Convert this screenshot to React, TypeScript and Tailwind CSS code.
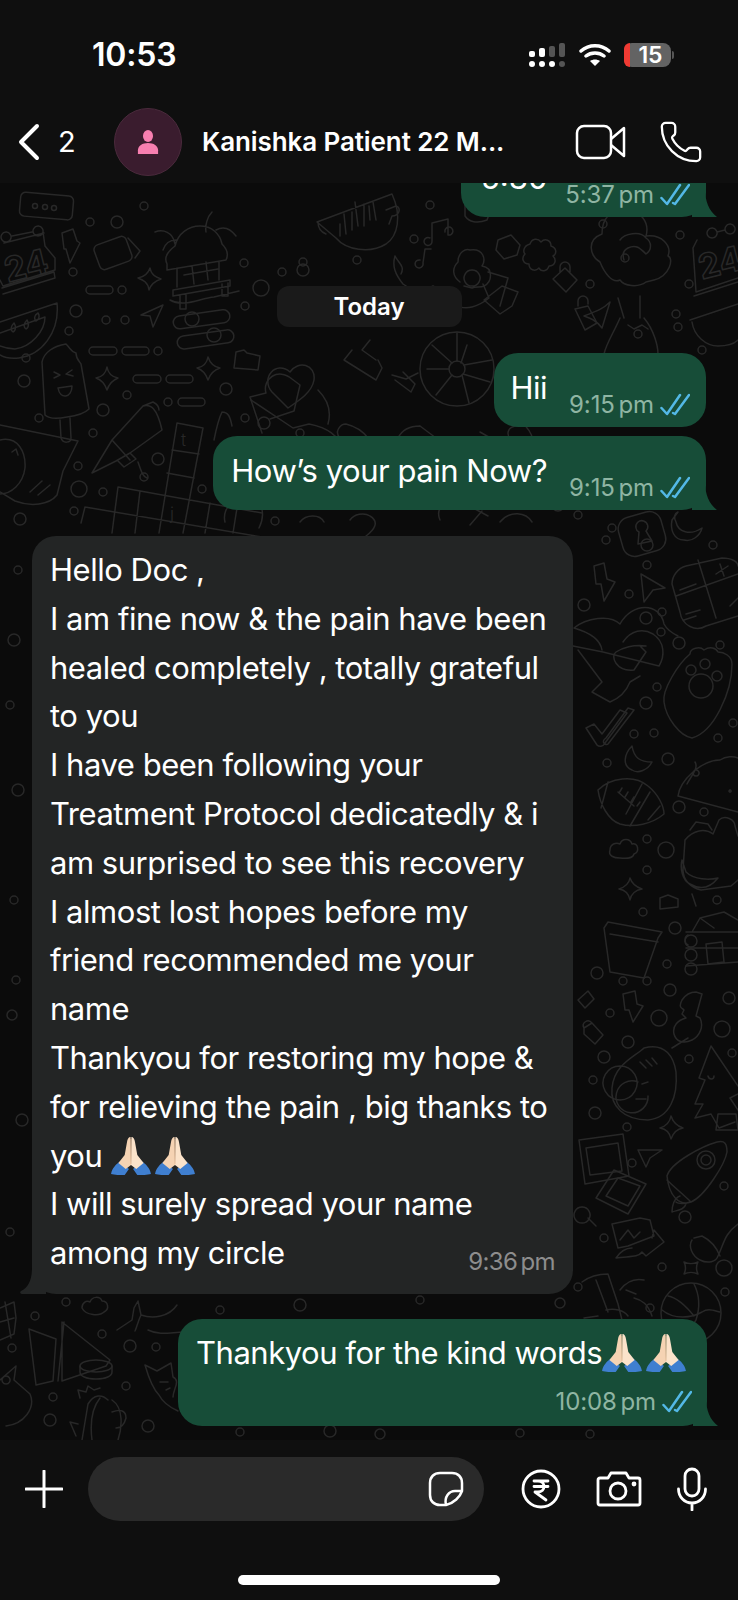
import { Phone } from "lucide-react"

const dots: number[][] = [
  [144,206,4],[90,222,4],[117,222,6],[244,263,4],[282,272,4],[261,288,8],[245,306,4],[73,272,4],[122,290,4],[76,311,6],[69,331,4],[106,320,4],[125,320,4],[158,351,4],[26,358,4],[24,381,6],[127,395,4],[168,402,4],[226,389,6],[103,410,6],[39,418,4],[245,418,4],[93,433,4],[158,459,6],[78,466,4],[144,477,4],[79,489,8],[103,492,4],[202,489,4],[74,511,4],[20,519,6],[275,521,4],
  [430,205,4],[414,239,4],[303,262,4],[357,260,4],[303,270,6],[603,224,4],[680,235,4],[625,258,4],[590,284,4],[689,284,4],[676,314,4],[638,334,4],[678,327,4],[702,350,4],[264,423,6],[312,450,4],[300,433,4],[435,470,7],[359,478,4],[385,495,5],[415,490,4],[558,505,6],[612,528,4],[578,515,4],
  [606,540,4],[647,545,6],[713,545,4],[647,565,4],[629,594,4],[584,605,6],[646,618,6],[662,612,4],[661,632,4],[679,643,6],[720,645,4],[657,687,4],[646,703,6],[733,723,4],[634,734,4],[654,733,4],[718,738,4],[607,763,4],[668,759,6],[679,807,6],[704,812,4],[647,839,4],[666,850,8],[647,870,4],[717,900,4],
  [643,912,4],[675,928,6],[597,973,6],[623,981,4],[647,981,4],[670,990,6],[667,964,4],[729,998,6],[610,1013,4],[659,1018,8],[722,1029,8],[628,1042,6],[604,1057,6],[689,1059,4],[732,1053,4],[593,1080,4],[595,1113,6],[627,1127,4],[632,1163,4],[724,1186,4],[685,1217,6],[604,1238,4],[662,1267,4],[724,1268,8],[578,1287,4],[725,1292,4],
  [66,1302,4],[35,1316,4],[102,1334,4],[12,1348,4],[130,1346,6],[156,1347,4],[126,1386,4],[53,1397,4],[50,1420,6],[148,1426,6],[10,1232,4],[22,1120,6],[12,1015,5],[16,980,4],[14,900,4],[18,790,6],[10,705,4],[14,640,6],[18,570,4],
  [220,1310,4],[300,1305,6],[420,1300,4],[560,1303,5],[650,1308,4],[240,1432,4],[380,1434,5],[520,1433,4],[330,1431,6],[590,1434,4],
]
const pills: number[][] = [[86,290,27],[89,351,28],[122,351,27],[133,379,28],[166,379,27],[178,402,27]]

function Wallpaper() {
  return (
    <svg className="absolute inset-0 h-full w-full" viewBox="0 183 738 1257" fill="none" stroke="#282828" strokeWidth="1.5" strokeLinecap="round" strokeLinejoin="round">
      {dots.map(([x, y, r], i) => <circle key={i} cx={x} cy={y} r={r} />)}
      {pills.map(([x, y, w], i) => <rect key={i} x={x} y={y - 4} width={w} height={8} rx={4} />)}
      {/* top left */}
      <rect x="20" y="194" width="53" height="24" rx="5" transform="rotate(5 46 206)" />
      <circle cx="35" cy="206" r="2.500" /><circle cx="45" cy="207" r="2.500" /><circle cx="54" cy="208" r="2.500" />
      <path d="M12 236l20-4M6 232a5 5 0 1 0 .1 0M38 226a5 5 0 1 0 .1 0M43 232l2 14 10 12 0 12-52 16-3-6M44 233l-40 10M2 288l52-16 1 6-52 16" />
      <text x="4" y="278" fontFamily="Inter, sans-serif" fontSize="34" fontWeight="700" transform="rotate(-14 24 265)">24</text>
      <path d="M0 322l57-19c3 30-16 52-38 55-8 1-14 0-19-3M0 333l45-16c0 14-14 30-30 32-6 0-10-1-15-3M14 323c-3 3-4 7-1 9 3-1 3-6 1-9zM27 320c-3 3-4 7-1 9 3-1 3-6 1-9zM38 313c-4 2-4 6-2 8 3-1 4-5 2-8z" />
      <path d="M62 233l11-4 4 12 3 2-10 20-4-14-2 0z" />
      <rect x="96" y="240" width="34" height="26" rx="5" transform="rotate(-20 113 253)" />
      <path d="M128 238l12 13-5 7" />
      <path d="M150 268c-2 6-6 9-12 10 5 2 10 4 11 12 2-6 6-9 12-11-5-2-10-4-11-11z" />
      <path d="M167 264c-4-8 3-14 8-18 3-13 14-20 25-20 12 0 20 8 22 18 4 4 7 10 4 16l-59 10zM177 268v19M219 262v18M173 290l57-10v6l-57 10zM180 296v13h6v-14M222 284v12h6v-13M170 300c14 8 30-2 44-3l25-6M192 266l2 18M206 262l2 18M184 275l34-6M155 232c8-3 18 0 20 12M163 250c2-6 6-10 13-10M212 212c-5 5-7 14-6 20M236 236c-6-8-13-10-20-6" />
      <path d="M141 315l22-10-10 22-3-11z" />
      <rect x="173" y="313" width="57" height="13" rx="6.500" transform="rotate(-8 200 319)" /><circle cx="192" cy="319" r="7" />
      <rect x="177" y="333" width="57" height="13" rx="6.500" transform="rotate(-8 205 339)" /><circle cx="214" cy="335" r="7" />
      <path d="M42 362c2-10 12-16 24-18 5 5 5 8 10 9 0 6 3 8 5 11l8 45c-4 4-14 7-22 8-10 2-18 2-22-2z M60 420l1 18c2 6 10 5 10 0l-1-20M54 372l6 3-6 3M72 370l-6 4 7 2M58 388l14-2c0 12-12 14-14 2z" />
      <path d="M107 367c-1 6-5 10-11 11 6 2 9 6 11 12 2-6 6-10 11-12-6-1-10-5-11-11z" />
      <path d="M208 357c-1 6-5 10-11 11 6 2 9 6 11 12 2-6 6-10 12-12-6-1-10-5-12-11z" />
      <path d="M236 352l8-2 3 3 13 3-2 14-24-2z" />
      <path d="M250 397l16-4c-4-14 12-26 26-14l8 6-6 26-24 8M250 397l12 36" />
      <path d="M92 473l20-33 31-34c8-2 14 2 19 24l-32 23-14 8zM112 440l18 20M130 453l6 6-12 8-6-6M143 406l10-4c4 2 6 4 6 8M138 462c3 8 4 14 9 16" />
      <path d="M0 425l78 16-15 30-6 24c-8 10-26 12-42 6L0 492M0 440c18-4 26 12 25 28-2 16-14 26-25 26M38 495l12-10M30 492l12-11M12 452l4-3 2 6" />
      <path d="M177 423l26 5-20 105M177 423l-18 110M172 450l27 4M167 473l27 5M118 487l144 26M85 507l177 30M118 487l-6 46M140 491l-5 42M85 507l-4 16M210 503l-5 30M237 508l-4 25" />
      <text x="181" y="446" fontFamily="Inter, sans-serif" fontSize="17" fontWeight="300" fill="#282828" stroke="none">t</text>
      <text x="170" y="520" fontFamily="Inter, sans-serif" fontSize="17" fontWeight="300" fill="#282828" stroke="none">j</text>
      <path d="M222 412c-4 8-6 18-8 28M222 412c6 0 8 4 10 14" />
      {/* top middle */}
      <path d="M317 222l75-28c10 22 6 42-6 50-16 10-40 6-50-6z M318 222c0 6 3 10 8 12M340 236v-12M346 234l-2-20M352 230v-18M358 226l-3-24M364 226v-22M370 220l-1-14M376 220l-3-18" />
      <path d="M386 210l10-4c6 2 3 10-4 10M392 216l-3 8" />
      <path d="M430 238a4 4 0 1 0 2 3v-18l16-4v16a4 4 0 1 0-3-3" />
      <path d="M420 260a4 4 0 1 0 3 3l2-14 6 0" />
      <path d="M395 256c-3 10 0 18 8 28 8 6 20 8 30 2 8 4 14 12 22 18 10 8 24 2 34-6l-6-14M395 256c4 8 10 10 6 18M460 282c-8-6-8-14-2-20 0-10 8-14 12-12 14-2 16 10 12 16 12 2 10 16 2 20-4 2-8 0-12 2l-8-2M488 272l20 6-8 28M484 300l16 14 12-8 6-14-16-6z M472 270a8 8 0 1 0 .1 0" />
      <path d="M498 240l13-5 9 10-3 10-13 4-8-9z" />
      <path d="M530 244c2-6 8-6 11-2 4-4 10-2 10 4 6 2 6 8 2 10 4 4 2 10-4 10-2 6-8 6-10 2-4 4-10 2-10-4-6 0-8-6-4-10-2-2-2-8 5-10z" />
      <path d="M553 279l12-11 12 12-11 12z M560 272v-5a5 5 0 0 1 10 0v5" />
      <path d="M575 309l13-3 9 17-12 7-10-21zM578 306v-5a5 5 0 0 1 10 0v3" />
      <path d="M602 328c-6-8-12-10-18-12 10-4 18-6 26-14z" />
      <path d="M600 262c-10-6-14-22 2-28 0-14 6-24 24-24 14 0 24 12 20 26 16-2 26 10 22 20 6 2 2 20-14 24l-8 2c-8 6-22 4-26-2-8 4-16-8-20-18zM620 240c4-6 20-10 26-2 6 4 6 12 0 16-6-6-10-10-18-6-4 2-6 6-4 12M640 296v22M618 298l6 20M644 318c10 12 14 28 14 36M620 318c-6 14-14 26-16 36M628 325l6 4 8-4 6 4" />
      <path d="M712 228a5 5 0 1 0 .1 0M730 224a5 5 0 1 0 .1 0M717 232l8-2M697 240l-4 8 3 44 42-14M694 296l44-14" />
      <text x="698" y="275" fontFamily="Inter, sans-serif" fontSize="34" fontWeight="700" transform="rotate(-14 718 262)">24</text>
      <path d="M690 320l48-16M692 322c2 14 14 24 26 24 8 0 16-2 20-6" />
      <path d="M465 198v18c4 6 12 8 22 4l8-22M520 198v14l6 2" />
      {/* wheel + heart row */}
      <circle cx="457" cy="369" r="37" /><circle cx="457" cy="369" r="8" />
      <path d="M457 333v28M432 345l20 18M427 369h22M436 395l16-20M467 345l-6 18M492 360l-28 5M490 382l-27-8M469 403l-7-28" />
      <path d="M288 408l-16-16c-12-14 4-32 18-20 8-12 26-8 24 8-2 12-14 20-26 28zM251 400l42 28 16-4c20 4 30 12 32 24M318 390c8 8 14 20 10 34" />
      <path d="M352 350l-8 10 32 20 6-12-4-8M392 375l14 4 12-6M370 340l-8 10 14 10M395 380l16 12 4-8-12-12" />
      <path d="M512 440c-6-4-6-14 6-14 4-8 14-6 14 0M340 438c-6-6 0-14 6-14 8 2 16 6 22 14M398 438c4-8 12-12 22-12M420 426l16 12M480 432l14 8M520 420c6 6 12 14 12 18" />
      <path d="M225 522c-4-16 14-30 30-22 8 4 10 16 4 28M300 522c6-8 20-8 24 0M350 520c4-6 14-8 20-4 10 6 4 14-4 20M440 520c-6-14 10-22 22-18l26 14M470 525l12-14M500 522c10-12 26-10 32 0" />
      {/* right strip */}
      <rect x="620" y="514" width="44" height="40" rx="12" transform="rotate(-16 642 534)" />
      <path d="M636 528a6 6 0 1 1 10 3l6 10-14 3 1-12a5 5 0 0 1-3-4z" />
      <path d="M676 522c2 10 14 14 26 6-2 8-10 14-18 12-10 0-14-10-12-20l6-8c-4 2-4 6-2 10z" />
      <path d="M594 566l10-3 3 16 8 3-11 19-3-17-5 0z" />
      <path d="M641 574l24 14-12 2-9 12z" />
      <path d="M672 584c0-8 6-16 14-18l36-8c10 0 16 4 16 8M672 584l8 28c2 14 16 20 26 14l32-10M676 596l62-22M698 560l18 58M680 590l16-6M716 574l12-8M720 564l4 12M684 620l12-4M686 614l14-4M730 606l8-8" />
      <path d="M574 628c12-10 36-14 46-4 12-22 40-22 44 0 2 4 6 8 14 12M574 628c14 4 26 10 28 22M646 646c-12-2-24 2-30 6-6 4 0 20 18 18l12-18-6-6zM573 646l30 6 56 14c6-10 6-24-6-32-10-6-22-4-30 8M578 650l24 32-10 10 18 10c10-4 16-10 20-20l10-6" />
      <path d="M664 702c-2-12 14-38 26-48 0-6 10-8 14-4 6-4 12-2 14 2 6 0 14 4 14 12 0 28-18 68-40 74-12-2-26-20-28-36z" />
      <circle cx="691" cy="670" r="5" /><circle cx="705" cy="664" r="5" /><circle cx="717" cy="676" r="5" /><circle cx="701" cy="686" r="12" />
      <path d="M586 728l8-4 8 10 18-24 7 3-22 30c-2 4-6 4-8 2zM606 738l22-30 6 2-26 34c-2 2-8-2-2-6z" />
      <path d="M632 746c2 12 8 16 20 16-4 8-14 12-20 8-10-4-8-16 0-24z" />
      <path d="M598 790c12-12 36-16 50-4 10 8 16 20 16 28-12 10-30 14-44 10-12-4-20-20-22-34zM608 782l-7 26M642 784l-16 30M618 792l16 14M622 788l-3 5M628 792l-3 5M634 797l-3 5M640 802l-3 4M650 792l-20 34M660 806l-12 14" />
      <path d="M678 796c2-16 24-36 42-36 6-4 14-4 18-2M678 796l60 16M695 762c4 6-4 14-8 22M696 770a3 3 0 1 0 .1 0M730 790a1 1 0 1 0 .1 0" />
      <path d="M690 830l6-8 12 2 4 6M685 840l-2 30c0 10 8 18 18 20l30-4 7-6M685 840c8-10 20-12 28-6l6-14c6-6 16 0 16 6l3 10M682 860c-2 8 0 20 8 24 10 6 20 4 28-6-8 2-24 2-32-6z" />
      <path d="M610 850c0-6 6-8 10-6 2-6 10-6 12 0 6-2 8 8 2 10-2 6-10 4-14 4-6 0-12-2-10-8z" />
      <path d="M630 878c-1 6-5 9-11 11 6 1 10 5 11 11 1-6 6-10 12-11-6-2-10-5-12-11z" />
      <path d="M660 898l8-3 10 4 0 8-18 2zM692 894l4 12" />
      <path d="M608 922l54 10-4 6-14 40-34-6-6-44zM610 934l48 8" />
      <path d="M688 945c-4-2-4-8 0-10M700 918l24-6 14 8M692 932l8-14 14 10M686 932h52M686 948h52M686 966l52-4M706 944l2 20 16-2-2-20z" />
      <circle cx="691" cy="941" r="6" /><circle cx="691" cy="955" r="6" /><circle cx="691" cy="969" r="6" />
      <path d="M578 1000l10-9 6 8-9 9z" />
      <path d="M623 994l12-3 2 13 6 2-10 16-4-12-4 0z" />
      <path d="M584 1028l8-5 11 12-8 9-11-10zM584 1028c-3-5 4-10 8-5" />
      <path d="M682 1000c-4 8 0 8 2 10l-2 4 4 4c-8 2-14 8-12 16 2 8 10 10 18 6 8-4 12-14 8-22l-4-2 6-22-6-2c-6 0-10 2-14 8zM688 1038l-16 10" />
      <path d="M644 1048c-8 8-30 16-32 40-2 18 12 32 36 32 22-2 30-24 28-48-2-14-10-30-32-24zM620 1100a17 17 0 1 1 .1 0M638 1082a16 16 0 1 0 10 14M640 1062l6 6M646 1060l6 6M652 1058l5 6M646 1099h-10M648 1082l-6 2" />
      <path d="M711 1046l-12 32 6 2-10 24 8 0-8 14 16-4 8 14 16-6M711 1046l27 40M738 1094l-8 4 8 12M716 1130l2-16 18 0 2 16zM708 1076c1 4 6 4 6 0" />
      <path d="M671 1116c-1 6-5 10-11 12 6 1 10 5 11 11 2-6 6-10 12-11-6-2-10-6-12-12z" />
      <path d="M579 1140l44-6 6 42-44 8zM586 1148l32-5 4 28-32 4z" />
      <path d="M614 1170l32 14-18 30-32-16zM618 1178l22 8-12 20-22-10z" />
      <path d="M638 1150l24 0-12 8-4 9z" />
      <path d="M667 1176c4-14 36-30 50-34 8-2 10 2 10 10-2 12-22 44-36 50-12 4-22-6-24-26zM667 1180c6 6 18 16 24 22M680 1196c-6 2-8 10-8 16 6-2 12-2 14-8M690 1202c-4 2-12 2-14 0" />
      <circle cx="706" cy="1160" r="9" /><circle cx="706" cy="1160" r="5" />
      <path d="M582 1207a8 8 0 1 0 .1 0M588 1218l8 8" />
      <path d="M612 1224l28-6 10 2 4 16-26 10-10 2zM620 1240l8-10 6 8 6-6M632 1248c-6 0-12 4-16 10 12-2 22 0 26-6l4 4 18-14-10-12-2 8" />
      <path d="M692 1240c-4 6 0 16 8 20 8 4 16 2 18-4 6-12 6-22 20-32M694 1238l8-2c8 4 14 10 18 20" />
      <path d="M684 1262c4 2 10 2 14 0-2 4-2 8 0 12-4-2-10-2-14 0 2-4 2-8 0-12z" />
      <path d="M582 1282c8-6 16-8 26-8l10 30 6 24M596 1280l12 32M620 1290c6-8 14-12 24-10M626 1290l10 4M628 1316c-4-6-14-8-22-6M598 1316l-14 2M652 1316c-4-12-10-16-18-18" />
      <circle cx="691" cy="1313" r="30" />
      <path d="M662 1310c12 10 30 8 40 2 6-4 10-2 18 0M694 1284c6 12 6 24 2 36l-8 12M668 1296c10 2 18 10 26 20" />
      {/* bottom left */}
      <path d="M29 1329l27 10-3 42-17 4zM62 1322l48 38-4 6-44 15zM64 1322l-6 59" />
      <ellipse cx="96" cy="1366" rx="16" ry="6" />
      <path d="M80 1366v6c0 4 6 7 16 7s16-3 16-7v-6" />
      <path d="M82 1308c0-5 4-8 8-6 2-6 10-6 12-1 6 0 8 8 2 11-4 4-18 4-22-4z" />
      <path d="M117 1330l15-10 2-12 4-7 3 14c12 4 28 2 36-10M141 1315c-3 6-4 12-6 16M148 1330c12 6 24 2 36 2" />
      <path d="M0 1308l14-6 2 16-2 16-14 6M0 1322l14-4M5 1302l6 36" />
      <path d="M0 1380l16-14-2 14 16 14c6 14-6 30-24 32M6 1376a4 4 0 1 0 .1 0" />
      <path d="M88 1404c6-10 14-10 20-4M88 1404l-6 36M112 1400c12 8 10 28 6 40M100 1398c-8 10-10 26-8 42M112 1412c10-4 14 0 14 6-2 8-6 10-10 10M80 1398l-2-8 8 2 2-6 6 4 6-2M78 1424l-8-2 6 14" />
      <path d="M145 1365l12 6 14-8 2 14c8 4 0 12 0 20M145 1365c4 14 8 24 14 30 4 8 10 12 19 16M160 1382l8 0M166 1390l4-2" />
    </svg>
  )
}

function Ticks() {
  return (
    <svg width="30" height="24" viewBox="0 0 30 24" fill="none" stroke="#53b8e6" strokeWidth="2.500" strokeLinecap="round" strokeLinejoin="round" className="ml-[6px]">
      <path d="M1.500 15l5.500 6L20 2" />
      <path d="M13 20l2 1L29 2" />
    </svg>
  )
}

function Meta({ time, read = true, tone = "text-[#8fb5a3]" }: { time: string; read?: boolean; tone?: string }) {
  return (
    <span className={`flex items-center whitespace-nowrap text-[24px] leading-[28px] tracking-[-0.1px] ${tone}`}>
      <span className={read ? "[word-spacing:-3px]" : "tracking-[-0.6px] [word-spacing:-3px]"}>{time}</span>
      {read && <Ticks />}
    </span>
  )
}

function TailOut() {
  return (
    <svg className="absolute bottom-0 right-[-12px]" width="26" height="28" viewBox="0 0 26 28">
      <path d="M0 0h13c0 12 4 22 12 28H0z" fill="#174d38" />
    </svg>
  )
}

function Pray() {
  return (
    <svg width="42" height="40" viewBox="0 0 40 40" preserveAspectRatio="none" className="inline-block shrink-0">
      <path d="M1 38c1-6 5-10 9-13l8 8-4 6c-4 0-10 0-13-1zM39 38c-1-6-5-10-9-13l-8 8 4 6c4 0 10 0 13-1z" fill="#3f7fd0" />
      <path d="M19.600 1c-2 0-3 2-3.400 5L14 19l-6 8 7 6 5-4z" fill="#f5d3b3" />
      <path d="M20.400 1c2 0 3 2 3.400 5L26 19l6 8-7 6-5-4z" fill="#fbe3ca" />
      <path d="M20 3v25" stroke="#e6bd98" strokeWidth="0.800" />
    </svg>
  )
}

const lines = [
  "Hello Doc ,",
  "I am fine now & the pain have been",
  "healed completely , totally grateful",
  "to you",
  "I have been following your",
  "Treatment Protocol dedicatedly & i",
  "am surprised to see this recovery",
  "I almost lost hopes before my",
  "friend recommended me your",
  "name",
  "Thankyou for restoring my hope &",
  "for relieving the pain , big thanks to",
]

export default function App() {
  return (
    <div className="flex h-[1600px] w-[738px] flex-col overflow-hidden bg-[#0b0b0b] font-['Inter',sans-serif] text-white">
      {/* status bar + contact header */}
      <header className="z-10 flex h-[183px] shrink-0 flex-col bg-[#0f0f0f]">
        <div className="flex h-[108px] items-start justify-between pl-[92px] pr-[64px] pt-[36px]">
          <span className="text-[32px] font-semibold leading-[38px] tracking-[-0.2px]">10:53</span>
          <div className="flex items-center gap-[13px] pt-[7px]">
            <svg width="37" height="24" viewBox="0 0 37 24">
              <g fill="#fff">
                <rect x="0" y="8" width="6" height="6" rx="2" /><rect x="10" y="5" width="6" height="9" rx="2" />
                <circle cx="3" cy="21" r="3" /><circle cx="13" cy="21" r="3" /><circle cx="23" cy="21" r="3" />
              </g>
              <g fill="#555">
                <rect x="20" y="3" width="6" height="11" rx="2" /><rect x="30" y="0" width="6" height="14" rx="2" /><circle cx="33" cy="21" r="3" />
              </g>
            </svg>
            <svg width="32" height="24" viewBox="0 0 32 24" fill="none" stroke="#fff" strokeWidth="3.500" strokeLinecap="round">
              <path d="M2 8c8-7 20-7 28 0M7 13c5-4 13-4 18 0" />
              <path d="M16 23l-5-5c3-2 7-2 10 0z" fill="#fff" stroke="none" />
            </svg>
            <div className="flex items-center gap-[1px]">
              <div className="flex h-[24px] w-[47px] rounded-[8px] bg-[#636363]">
                <div className="h-full w-[6px] rounded-l-[8px] bg-[#f03a33]" />
                <span className="flex-1 text-center text-[23px] font-semibold leading-[24px]">15</span>
              </div>
              <div className="h-[8px] w-[2px] rounded-r-full bg-[#555]" />
            </div>
          </div>
        </div>
        <div className="flex items-center pl-[17px] pr-[34px]">
          <svg width="24" height="38" viewBox="0 0 24 38" fill="none" stroke="#fff" strokeWidth="4" strokeLinecap="round" strokeLinejoin="round">
            <path d="M20 3L4 19l16 16" />
          </svg>
          <span className="ml-[17px] w-[56px] text-[29px] leading-[36px]">2</span>
          <div className="flex h-[68px] w-[68px] items-center justify-center rounded-full border border-[#4a2a3c] bg-[#3a1c2e]">
            <svg width="22" height="24" viewBox="0 0 24 26" fill="#f77fb0">
              <ellipse cx="12" cy="6.500" rx="5.500" ry="6.500" />
              <path d="M1 26v-4c0-5 5-8 11-8s11 3 11 8v4z" />
            </svg>
          </div>
          <span className="ml-[20px] flex-1 whitespace-nowrap text-[26px] font-semibold leading-[34px] tracking-[-0.1px]">Kanishka Patient 22 M...</span>
          <svg width="52" height="36" viewBox="0 0 52 36" fill="none" stroke="#fff" strokeWidth="2.500" strokeLinejoin="round" className="mr-[31px]">
            <rect x="2" y="2" width="34" height="32" rx="7" />
            <path d="M36 15l13-11v28L36 21" />
          </svg>
          <Phone size={46} strokeWidth={1.200} color="#fff" />
        </div>
      </header>

      {/* message list */}
      <main className="relative flex min-h-0 flex-1 flex-col overflow-hidden">
        <Wallpaper />

        <div className="relative mt-[-40px] mr-[32px] flex h-[74px] w-[245px] self-end rounded-[24px] bg-[#174d38] pl-[20px] pr-[16px] pt-[16px]">
          <span className="text-[31px] leading-[38px]">5:30</span>
          <div className="ml-auto mt-[22px]"><Meta time="5:37 pm" /></div>
          <TailOut />
        </div>

        <div className="relative mt-[69px] flex h-[41px] w-[185px] items-center justify-center self-center rounded-[12px] bg-[#1a1a1a] text-[24px] font-semibold">Today</div>

        <div className="relative mr-[32px] mt-[26px] flex h-[74px] items-start self-end rounded-[24px] bg-[#174d38] pl-[16px] pr-[16px]">
          <span className="mr-[22px] mt-[14px] text-[31px] leading-[42px] tracking-[-0.47px]">Hii</span>
          <div className="mt-[38px]"><Meta time="9:15 pm" /></div>
        </div>

        <div className="relative mr-[32px] mt-[9px] flex h-[74px] items-start self-end rounded-[24px] bg-[#174d38] pl-[18px] pr-[16px]">
          <span className="mr-[22px] mt-[14px] text-[31px] leading-[42px] tracking-[-0.47px]">How’s your pain Now?</span>
          <div className="mt-[38px]"><Meta time="9:15 pm" /></div>
          <TailOut />
        </div>

        <div className="relative ml-[32px] mt-[26px] h-[758px] w-[541px] rounded-[24px] bg-[#232525] pl-[18px] pr-[18px] pt-[10px] text-[31px] leading-[48.800px] tracking-[-0.47px]">
          {lines.map((l) => <div key={l} className="whitespace-nowrap">{l}</div>)}
          <div className="flex items-center gap-[8px] whitespace-nowrap">you <span className="flex gap-[2px]"><Pray /><Pray /></span></div>
          <div className="whitespace-nowrap">I will surely spread your name</div>
          <div className="flex items-end justify-between whitespace-nowrap">
            <span>among my circle</span>
            <div className="translate-y-[-2px]"><Meta time="9:36 pm" read={false} tone="text-[#8d8d8d]" /></div>
          </div>
          <svg className="absolute bottom-0 left-[-12px]" width="26" height="26" viewBox="0 0 26 26">
            <path d="M26 0H12c0 12-4 20-11 23-2 2 0 3 2 3h23z" fill="#232525" />
          </svg>
        </div>

        <div className="relative mr-[31px] mt-[25px] flex h-[107px] w-[529px] flex-col self-end rounded-[24px] bg-[#174d38] pl-[18px] pr-[15px]">
          <div className="mt-[13px] flex items-center whitespace-nowrap text-[31px] leading-[42px] tracking-[-0.47px]">
            <span>Thankyou for the kind words</span>
            <span className="ml-[-1px] flex gap-[2px]"><Pray /><Pray /></span>
          </div>
          <div className="ml-auto mt-[14px]"><Meta time="10:08 pm" /></div>
          <TailOut />
        </div>
      </main>

      {/* composer */}
      <footer className="z-10 flex h-[160px] shrink-0 flex-col bg-[#0f0f0f]">
        <div className="mt-[17px] flex items-center pl-[25px]">
          <svg width="38" height="38" viewBox="0 0 38 38" stroke="#fff" strokeWidth="3" strokeLinecap="round">
            <path d="M19 1v36M1 19h36" />
          </svg>
          <div className="ml-[25px] flex h-[64px] w-[396px] items-center justify-end rounded-full bg-[#2a2a2a] pr-[20px]">
            <svg width="36" height="36" viewBox="0 0 36 36" fill="none" stroke="#fff" strokeWidth="2.500" strokeLinejoin="round">
              <path d="M34 20V12C34 6 30 2 24 2H12C6 2 2 6 2 12v12c0 6 4 10 10 10h6c8-2 14-8 16-14z" />
              <path d="M18 34c-2-8 3-14 9-14h7" />
            </svg>
          </div>
          <svg width="40" height="40" viewBox="0 0 40 40" fill="none" stroke="#fff" strokeWidth="2.800" strokeLinecap="round" strokeLinejoin="round" className="ml-[37px]">
            <circle cx="20" cy="20" r="18" />
            <path d="M13 12h14M13 17.500h14M17 12c8 0 8 11 0 11h-3l11 8" />
          </svg>
          <svg width="46" height="36" viewBox="0 0 46 36" fill="none" stroke="#fff" strokeWidth="2.800" strokeLinejoin="round" className="ml-[35px]">
            <path d="M4 7h8l3-5h15l3 5h9a2 2 0 0 1 2 2v23a2 2 0 0 1-2 2H4a2 2 0 0 1-2-2V9a2 2 0 0 1 2-2z" />
            <circle cx="22" cy="20" r="8" />
            <circle cx="38" cy="13" r="1" fill="#fff" />
          </svg>
          <svg width="30" height="44" viewBox="0 0 30 44" fill="none" stroke="#fff" strokeWidth="2.800" strokeLinecap="round" className="ml-[35px]">
            <rect x="8" y="2" width="14" height="27" rx="7" />
            <path d="M1.500 22c0 8 6 14 13.500 14s13.500-6 13.500-14M15 36v7" />
          </svg>
        </div>
        <div className="mt-[54px] h-[10px] w-[262px] self-center rounded-full bg-white" />
      </footer>
    </div>
  )
}
